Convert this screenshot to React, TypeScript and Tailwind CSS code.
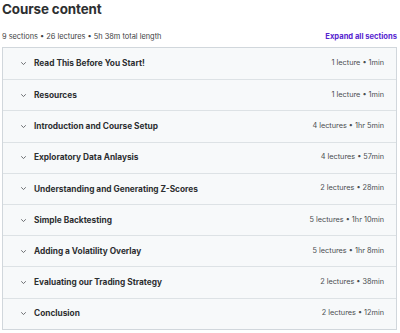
import React from "react";

const sections = [
  ["Read This Before You Start!", "1 lecture • 1min"],
  ["Resources", "1 lecture • 1min"],
  ["Introduction and Course Setup", "4 lectures • 1hr 5min"],
  ["Exploratory Data Anlaysis", "4 lectures • 57min"],
  ["Understanding and Generating Z-Scores", "2 lectures • 28min"],
  ["Simple Backtesting", "5 lectures • 1hr 10min"],
  ["Adding a Volatility Overlay", "5 lectures • 1hr 8min"],
  ["Evaluating our Trading Strategy", "2 lectures • 38min"],
  ["Conclusion", "2 lectures • 12min"],
];

function Chevron() {
  return (
    <svg width="7" height="5" viewBox="0 0 7 5" className="shrink-0">
      <path d="M1.2 1.3 L3.5 3.5 L5.8 1.3" fill="none" stroke="#4a4d50" strokeWidth="0.8" />
    </svg>
  );
}

export default function App() {
  return (
    <div className="w-[400px] h-[333px] bg-white overflow-hidden" style={{ fontFamily: "Inter, 'Liberation Sans', sans-serif" }}>
      <div className="pl-[2px] pr-[3px]">
        <h2 className="text-[13.4px] font-bold text-[#2d2f31] leading-[18px] pt-[0px] tracking-[-0.1px]">Course content</h2>
        <div className="flex items-end justify-between mt-[10px] h-[14px]">
          <span className="text-[7.4px] text-[#3e4143] leading-[10px]">9 sections • 26 lectures • 5h 38m total length</span>
          <span className="text-[7.6px] font-bold text-[#5624d0] leading-[10px]">Expand all sections</span>
        </div>
        <div className="mt-[5px] border border-[#d1d7dc] bg-[#f7f9fa]">
          {sections.map(([t, m], i) => (
            <div
              key={i}
              className={"flex items-center h-[31.2px] pl-[17px] pr-[12px] " + (i > 0 ? "border-t border-[#dde2e5]" : "")}
            >
              <Chevron />
              <span className="ml-[7px] text-[8.3px] font-bold text-[#2d2f31]">{t}</span>
              <span className="ml-auto text-[7.3px] text-[#4a4d50]">{m}</span>
            </div>
          ))}
        </div>
      </div>
    </div>
  );
}
